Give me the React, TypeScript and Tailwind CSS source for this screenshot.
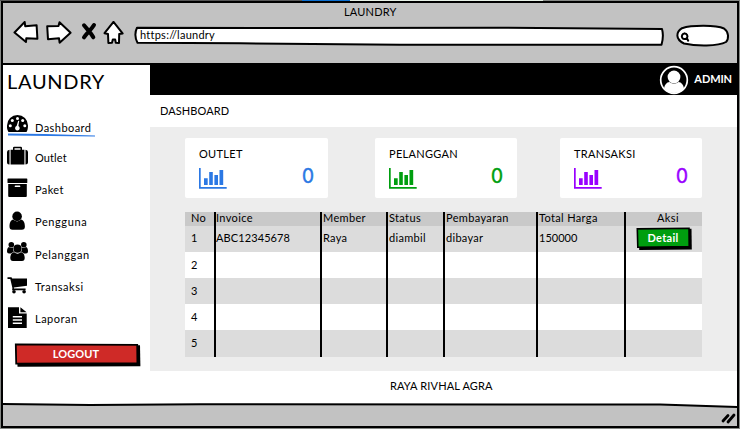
import type { ReactNode } from "react";

const ink = { fill: "none", stroke: "#000", strokeWidth: 2, strokeLinejoin: "round" as const, strokeLinecap: "round" as const };

function Chrome() {
  return (
    <header className="flex h-[60px] w-full flex-col bg-[#c2c2c2]">
      <div className="h-[18px] pt-[2px] pl-[341px] text-[11px] leading-[14px] tracking-[0.2px]">LAUNDRY</div>
      <div className="flex h-[40px]">
        <svg className="h-[40px] w-[131px] shrink-0" viewBox="3 21 131 40">
          <g {...ink} fill="#fff">
            <path d="M14.5 32.5 L24.7 22 L25.2 26.2 L36.6 25.2 L37.4 38.7 L26.3 38.2 L26 42 Z" />
            <path d="M47.2 26.2 L58.5 26 L59.5 22.3 L70.6 32.8 L59.6 42.7 L59 38.2 L48 39.2 Z" />
            <path d="M113.5 21.8 L122.6 33.4 L119.2 34 L119 43 L115.8 42.7 L115.2 39.6 L112.8 39.6 L112 42.7 L108.4 43 L108 34 L104.5 33.2 Z" />
          </g>
          <path d="M84 25.3 C87 29 91 33 93.3 37.3 M94 25 C91 30 87 33 84 37.3" fill="none" stroke="#000" strokeWidth="4" strokeLinecap="round" />
        </svg>
        <div className="relative mt-[5px] h-[20px] w-[532px]">
          <svg className="absolute inset-0 h-[20px] w-[532px]" viewBox="134 26 532 20">
            <path d="M137 27.8 L300 28 L500 27.7 L662 29 Q664 36 661.5 44.8 L400 44.8 L240 43.3 L137.5 42.7 Q133.5 35 137 27.8 Z" {...ink} fill="#fff" />
          </svg>
          <div className="relative pt-[2px] pl-[6px] text-[11px] leading-[14px] tracking-[0.25px]">https://laundry</div>
        </div>
        <svg className="mt-[3px] ml-[10px] h-[24px] w-[56px]" viewBox="676 24 56 24">
          <path d="M682 28.2 C692 25 716 25 724 28.5 C729 32 729 39 726 42 C718 46.5 696 46.2 684 43.5 C675 39 676 32 682 28.2 Z" {...ink} fill="#fff" />
          <path d="M684.7 33.5 A2.8 2.8 0 1 1 684.6 33.5 M686.8 38 L688.2 40.7" {...ink} />
        </svg>
      </div>
    </header>
  );
}

const menu: { label: string; style: string; box: string; icon: ReactNode }[] = [
  {
    label: "Dashboard", style: "mt-[11px] tracking-[0.45px]", box: "7 110 22 32",
    icon: (
      <>
        <path d="M8.5 132 C6.5 129 7 126 7 125.5 A10.5 10.5 0 0 1 28 125.5 C28 128 27.5 130.5 26.5 132 Z" />
        <g fill="#fff">
          <circle cx="10.3" cy="125.8" r="1.5" /><circle cx="12.3" cy="120.6" r="1.5" /><circle cx="17.5" cy="118.4" r="1.5" />
          <circle cx="22.7" cy="120.6" r="1.5" /><circle cx="24.8" cy="125.8" r="1.5" />
          <path d="M18.2 120.8 L19.2 121 L18.4 126.1 A2.3 2.3 0 1 1 16.6 126 Z" />
        </g>
      </>
    ),
  },
  {
    label: "Outlet", style: "mt-[9px] tracking-[0.1px]", box: "7 142 22 32",
    icon: (
      <>
        <path d="M9.5 149.8 V164.5 H9 Q7 164.3 7 162.5 V152 Q7 150 9.5 149.8 M25.5 149.8 V164.5 Q28 164.3 28 162.5 V152 Q28 150 25.5 149.8" />
        <path d="M10.6 149.8 H13 V148 Q13 146.8 14.2 146.8 H20.8 Q22 146.8 22 148 V149.8 H24.4 V164.5 H10.6 Z M14.5 148.3 V149.8 H20.5 V148.3 Z" fillRule="evenodd" />
      </>
    ),
  },
  {
    label: "Paket", style: "mt-[9px] tracking-[0.4px]", box: "7 174 22 32",
    icon: (
      <>
        <rect x="7.5" y="178.5" width="19.8" height="4.5" rx="0.6" />
        <path d="M8.2 184 H26.8 V196 Q26.8 197 25.8 197 H9.2 Q8.2 197 8.2 196 Z" />
        <rect x="14.7" y="185.6" width="5.6" height="1.5" rx="0.7" fill="#fff" />
      </>
    ),
  },
  {
    label: "Pengguna", style: "mt-[9px] tracking-[0.6px]", box: "7 206 22 32",
    icon: (
      <>
        <circle cx="17.1" cy="216.4" r="4.8" />
        <path d="M13 219.6 Q17.1 223.2 21.2 219.6 C24 220.4 24.9 223.5 24.9 226.5 Q24.9 229.8 21.8 229.8 H12.5 Q9.5 229.8 9.5 226.5 C9.5 223.5 10.3 220.4 13 219.6" />
      </>
    ),
  },
  {
    label: "Pelanggan", style: "mt-[10px] tracking-[0.6px]", box: "7 238 22 32",
    icon: (
      <>
        <circle cx="11.3" cy="244.8" r="2.8" /><circle cx="23.8" cy="244.8" r="2.8" />
        <path d="M9 247 Q11 248.8 13.2 247.5 Q12.5 250.5 14 252.3 Q12 252.3 11 253.6 H9 Q7 253.4 7 251.5 Q7 247.5 9 247 M26 247 Q24 248.8 21.8 247.5 Q22.5 250.5 21 252.3 Q23 252.3 24 253.6 H26 Q28 253.4 28 251.5 Q28 247.5 26 247" />
        <circle cx="17.5" cy="248.7" r="4.1" />
        <path d="M14.2 252.3 Q17.5 255 20.8 252.3 C23.8 252.5 24.7 255.5 24.7 258 Q24.7 261 22 261 H13 Q10.3 261 10.3 258 C10.3 255.5 11.2 252.5 14.2 252.3" />
      </>
    ),
  },
  {
    label: "Transaksi", style: "mt-[10px] tracking-[0.5px]", box: "7 270 22 32",
    icon: (
      <>
        <path d="M7.5 277.2 H11.3 Q12 277.3 12.2 278.6 H27 V285.8 L13.8 287.5 L14 288.6 H25.6 V290.2 H12.1 L12.4 288 L10.3 278.9 H7.5 Z" />
        <circle cx="14" cy="291.7" r="1.8" /><circle cx="24.1" cy="291.7" r="1.8" />
      </>
    ),
  },
  {
    label: "Laporan", style: "mt-[10px] tracking-[0.5px]", box: "7 302 22 32",
    icon: (
      <>
        <path d="M8 307.2 H19 V313.5 H26.7 V328 H8 Z M20.4 307.2 L26.6 312.2 H20.4 Z" />
        <path d="M12.8 316.8 H22 M12.8 320 H22 M12.8 323.3 H22" stroke="#fff" strokeWidth="1.4" />
      </>
    ),
  },
];

function Sidebar() {
  return (
    <aside className="flex w-[147px] shrink-0 flex-col bg-white">
      <h1 className="h-[45px] pt-[3px] pl-[4px] text-[20px] leading-[26px] tracking-[0.7px]">LAUNDRY</h1>
      <nav>
        {menu.map((m, i) => (
          <div key={m.label} className="relative flex h-[32px] pl-[4px]">
            <svg className="h-[32px] w-[22px] shrink-0" viewBox={m.box}>{m.icon}</svg>
            <span className={`ml-[6px] h-[14px] text-[11px] leading-[14px] ${m.style}`}>{m.label}</span>
            {i === 0 && (
              <svg className="absolute top-[23px] left-[4px] h-[5px] w-[90px]" viewBox="7 133 90 5">
                <path d="M8 133.6 L45 134 L95 135.6 L95 136.5 L50 136 L8 135.4 Z" fill="#2b78e4" />
              </svg>
            )}
          </div>
        ))}
      </nav>
      <button className="relative mt-[8px] ml-[11px] h-[26px] w-[128px] text-white">
        <svg className="absolute inset-0 h-[26px] w-[128px]" viewBox="14 342 128 26">
          <path d="M17 346 L140 345.2 L140.4 366.2 L17.5 366.7 Z" />
          <path d="M15.8 344.4 L137.2 344.9 L137.4 363.2 L16.2 363.6 Z" fill="#cf2a27" stroke="#000" strokeWidth="1.8" />
        </svg>
        <span className="relative -top-[1px] block pr-[4px] text-center text-[11px] leading-[20px] font-bold tracking-[0.1px]">LOGOUT</span>
      </button>
    </aside>
  );
}

function StatCard({ title, style }: { title: string; style: string }) {
  return (
    <section className={`flex h-[60px] flex-col rounded-[2px] bg-white pl-[14px] ${style}`}>
      <h2 className="mt-[9px] h-[14px] text-[11px] leading-[14px] tracking-[0.3px] text-black">{title}</h2>
      <div className="mt-[6px] flex h-[24px] justify-between pr-[14px]">
        <svg className="h-[22px] w-[29px]" viewBox="0 0 29 22" fill="currentColor">
          <path d="M0 1 H1.7 V20 H27.7 V21.8 H0 Z M5 11.3 H8.7 V18 H5 Z M10.2 5 H13.8 V18 H10.2 Z M15.4 8 H19 V18 H15.4 Z M20.5 3 H24.2 V18 H20.5 Z" />
        </svg>
        <span className="-mt-[4px] scale-x-[0.9] text-[21px] leading-[24px] [-webkit-text-stroke:0.5px_currentColor]">0</span>
      </div>
    </section>
  );
}

const cols = "grid grid-cols-[31px_106px_66px_57px_93px_88px_76px]";
const indent = ["pl-[6px]", "", "pl-px", "pl-px", "pl-px", "pl-px", ""];
const head = ["No", "Invoice", "Member", "Status", "Pembayaran", "Total Harga", "Aksi"];
const rows = [["1", "ABC12345678", "Raya", "diambil", "dibayar", "150000", "Detail"], ["2"], ["3"], ["4"], ["5"]];

function DetailButton() {
  return (
    <button className="relative mt-px ml-[10px] h-[24px] w-[58px] text-white">
      <svg className="absolute inset-0 h-[24px] w-[58px]" viewBox="636 227 58 24">
        <path d="M639 230 L691.5 228.8 L691.8 249.4 L639.2 250 Z" />
        <path d="M637.3 228.9 L689 228.3 L689.2 246.6 L637.8 247.3 Z" fill="#009e0f" stroke="#000" strokeWidth="1.6" />
      </svg>
      <span className="relative -top-px block pr-[4px] text-center text-[11px] leading-[16px] font-bold">Detail</span>
    </button>
  );
}

function Table() {
  return (
    <div className="mt-[14px] ml-[35px] w-[517px] text-[11px]">
      <div className={`${cols} h-[14px] bg-[#c9c9c9]`}>
        {head.map((h, c) => (
          <div key={h} className={`leading-[11px] tracking-[0.35px] whitespace-nowrap ${c === 6 ? "pl-[8px] text-center" : "border-r-2 border-black"} ${indent[c]}`}>{h}</div>
        ))}
      </div>
      {rows.map((r, i) => (
        <div key={i} className={`${cols} h-[26px] ${i % 2 ? "bg-white" : "bg-[#dcdcdc]"} last:h-[27px]`}>
          {head.map((h, c) => (
            <div key={h} className={`${i === 0 ? "leading-[23px]" : "leading-[25px]"} ${c === 1 ? "tracking-[0.1px]" : c === 5 ? "tracking-[0px]" : "tracking-[0.3px]"} ${c < 6 ? "border-r-2 border-black" : ""} ${indent[c]}`}>
              {c === 6 ? r[c] && <DetailButton /> : r[c]}
            </div>
          ))}
        </div>
      ))}
    </div>
  );
}

export default function App() {
  return (
    <div className="flex h-[429px] w-[740px] flex-col bg-[#858885] font-['Lato','Liberation_Sans',sans-serif] text-black">
      <div className="flex h-px">
        <div className="w-[302px] bg-[#555]" />
        <div className="w-[48px] bg-[#0b6fd0]" />
        <div className="w-[193px] bg-[#e6f0e6]" />
      </div>
      <div className="ml-px flex h-[427px] w-[738px] flex-col border-2 border-black bg-white">
        <Chrome />
        <div className="h-[2px] bg-black" />
        <div className="flex h-[338px]">
          <Sidebar />
          <main className="flex w-[587px] flex-col">
            <div className="flex h-[30px] items-start justify-end bg-black pr-[5px] text-white">
              <svg className="h-[30px] w-[30px]" viewBox="0 0 30 30">
                <circle cx="15" cy="15" r="13.3" fill="#000" stroke="#fff" strokeWidth="1.7" />
                <circle cx="15" cy="12" r="6.4" fill="#fff" />
                <path d="M5 23.5 Q6 17.5 10.5 17 Q15 20.5 19.5 17 Q24 17.5 25 23.5 Q21 28 15 28 Q9 28 5 23.5" fill="#fff" />
              </svg>
              <span className="mt-[7px] ml-[5px] text-[11px] leading-[14px] font-bold tracking-[-0.1px]">ADMIN</span>
            </div>
            <div className="h-[32px] bg-white pt-[9px] pl-[10px] text-[11px] leading-[14px] tracking-[0.1px]">DASHBOARD</div>
            <div className="h-[244px] bg-[#ededed] pt-[11px]">
              <div className="ml-[35px] grid w-[517px] grid-cols-[190px_185px_142px]">
                <StatCard title="OUTLET" style="w-[143px] text-[#2b78e4]" />
                <StatCard title="PELANGGAN" style="w-[142px] text-[#009e0f]" />
                <StatCard title="TRANSAKSI" style="w-[142px] text-[#9900ff]" />
              </div>
              <Table />
            </div>
            <footer className="h-[32px] pt-[8px] pl-[240px] text-[11px] leading-[14px] tracking-[0.15px]">RAYA RIVHAL AGRA</footer>
          </main>
        </div>
        <svg className="h-[23px] w-[734px]" viewBox="3 403 734 23">
          <path d="M3 404 L90 405 L200 404.3 L660 404.5 L737 407 V426 H3 Z" fill="#c2c2c2" />
          <path d="M3 404 L90 405 L200 404.3 L660 404.5 L737 407" {...ink} />
          <path d="M723 421 L728 415.5 M728 422 L734 415" {...ink} strokeWidth={2.8} />
        </svg>
      </div>
    </div>
  );
}
